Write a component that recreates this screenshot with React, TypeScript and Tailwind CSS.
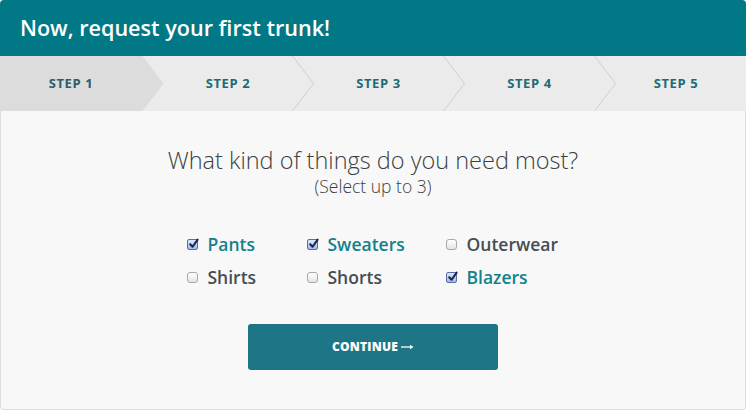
import React from 'react';

const steps = [
  { label: 'STEP 1', width: 142 },
  { label: 'STEP 2', width: 150 },
  { label: 'STEP 3', width: 151 },
  { label: 'STEP 4', width: 151 },
  { label: 'STEP 5', width: 152 },
];

const options = [
  { label: 'Pants', checked: true },
  { label: 'Sweaters', checked: true },
  { label: 'Outerwear', checked: false },
  { label: 'Shirts', checked: false },
  { label: 'Shorts', checked: false },
  { label: 'Blazers', checked: true },
];

const Box: React.FC<{ checked: boolean }> = ({ checked }) =>
  checked ? (
    <span className="relative inline-block shrink-0 w-[11px] h-[11px] rounded-[2px] border border-[#5a6fa8] bg-gradient-to-b from-[#dbe6fb] to-[#9fb7ea]">
      <svg width="12" height="12" viewBox="0 0 12 12" className="absolute -top-[2px] left-[0px]">
        <path d="M2.2 6.2 L4.6 8.8 L9.6 1.6" fill="none" stroke="#1a2440" strokeWidth="2" strokeLinecap="round" strokeLinejoin="round" />
      </svg>
    </span>
  ) : (
    <span className="inline-block shrink-0 w-[11px] h-[11px] rounded-[3px] border border-[#a9a9a9] bg-gradient-to-b from-white to-[#e4e4e4]" />
  );

export default function App() {
  return (
    <div className="w-[746px] h-[410px] bg-white" style={{ fontFamily: '"Open Sans", "Noto Sans", sans-serif' }}>
      <div className="h-14 bg-[#007885] rounded-t-[4px] px-5 flex items-center">
        <h1 className="text-white text-[21.6px] font-semibold">Now, request your first trunk!</h1>
      </div>

      <div className="flex h-[55px] bg-[#ebebeb]">
        {steps.map((s, i) => (
          <div
            key={s.label}
            className={`relative flex items-center justify-center ${i === 0 ? 'bg-[#dcdcdc] z-10' : ''}`}
            style={{ width: s.width }}
          >
            <span className={`text-[13px] font-bold tracking-[0.6px] ${i === 0 ? 'text-[#2d5d66]' : 'text-[#1b6b76]'} ${i > 0 && i < 4 ? 'pl-[22px]' : ''} ${i === 4 ? 'pl-[12px]' : ''}`}>
              {s.label}
            </span>
            {i < 4 && (
              <svg width="23" height="55" viewBox="0 0 23 55" className="absolute top-0 left-full">
                {i === 0 ? (
                  <polygon points="0,0 0.5,0 21.5,27.5 0.5,55 0,55" fill="#dcdcdc" />
                ) : (
                  <polyline points="0.5,0 21.5,27.5 0.5,55" fill="none" stroke="#cfcfcf" strokeWidth="1" />
                )}
              </svg>
            )}
          </div>
        ))}
      </div>

      <div className="h-[299px] bg-[#f8f8f8] border-x border-b border-[#dddddd] rounded-b-[4px] flex flex-col items-center pt-[33px]">
        <h2 className="text-[23.5px] font-light text-[#3a3f42] leading-[32px]">What kind of things do you need most?</h2>
        <p className="text-[17.5px] font-light text-[#3a3f42] leading-[24px] -mt-[2px]">(Select up to 3)</p>

        <div className="grid grid-cols-[120px_139px_130px] gap-y-[9px] mt-[34px] ml-[16px]">
          {options.map((o) => (
            <label key={o.label} className="flex items-center gap-[10px] h-[24px]">
              <Box checked={o.checked} />
              <span className={`text-[17.5px] font-semibold ${o.checked ? 'text-[#13808b]' : 'text-[#454d51]'}`}>{o.label}</span>
            </label>
          ))}
        </div>

        <button className="mt-[35px] w-[250px] h-[46px] rounded-[3px] bg-[#1e7585] text-white text-[12px] font-extrabold tracking-[0.2px] flex items-center justify-center gap-[3px]">
          CONTINUE
          <svg width="13" height="6" viewBox="0 0 13 6">
            <path d="M0 3 H11" stroke="white" strokeWidth="1.3" />
            <path d="M9 0.8 L12.5 3 L9 5.2 Z" fill="white" />
          </svg>
        </button>
      </div>
    </div>
  );
}
